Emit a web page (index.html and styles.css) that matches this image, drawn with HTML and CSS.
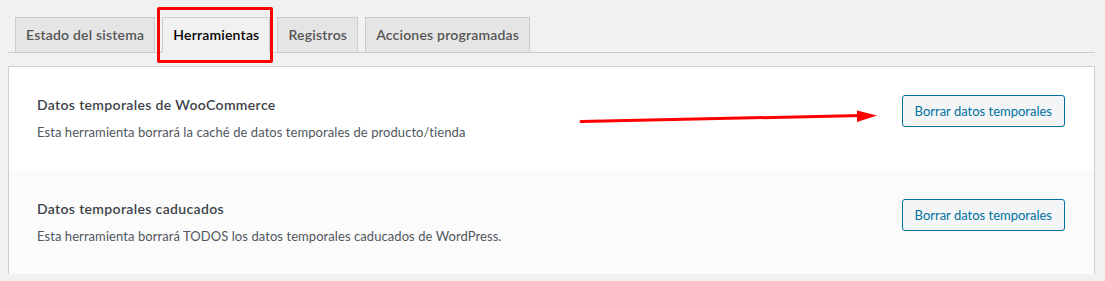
FILE: index.html
```html
<!DOCTYPE html>
<html lang="es">
<head>
<meta charset="utf-8">
<title>Estado de WooCommerce - Herramientas</title>
<link rel="stylesheet" href="styles.css">
</head>
<body>
<div class="wrap">
  <nav class="tabs">
    <a class="tab">Estado del sistema</a>
    <a class="tab tab-active">Herramientas<span class="highlight"></span></a>
    <a class="tab">Registros</a>
    <a class="tab">Acciones programadas</a>
  </nav>
  <div class="card">
    <div class="row">
      <div class="info">
        <p class="title">Datos temporales de WooCommerce</p>
        <p class="desc">Esta herramienta borrará la caché de datos temporales de producto/tienda</p>
      </div>
      <button class="btn">Borrar datos temporales</button>
    </div>
    <div class="row row-alt">
      <div class="info">
        <p class="title">Datos temporales caducados</p>
        <p class="desc">Esta herramienta borrará TODOS los datos temporales caducados de WordPress.</p>
      </div>
      <button class="btn">Borrar datos temporales</button>
    </div>
  </div>
</div>
<svg class="arrow" width="310" height="30" viewBox="575 100 310 30">
  <line x1="581" y1="121.5" x2="862" y2="115.5" stroke="#f00" stroke-width="3" stroke-linecap="round"/>
  <polygon points="857,110.5 877,115.5 857,122" fill="#f00"/>
</svg>
</body>
</html>
```
FILE: styles.css
```css
html, body {
  margin: 0;
  padding: 0;
  background: #f1f1f1;
  font-family: Lato, "Noto Sans", sans-serif;
  height: 100%;
  overflow: hidden;
}
.wrap {
  margin: 0 10px 0 8px;
}
.tabs {
  display: flex;
  gap: 7px;
  padding: 17px 0 0 7px;
  border-bottom: 1px solid #ccc;
}
.tab {
  position: relative;
  display: block;
  padding: 5px 10px;
  line-height: 24px;
  font-size: 14px;
  font-weight: 600;
  letter-spacing: 0.2px;
  color: #555;
  background: #e5e5e5;
  border: 1px solid #ccc;
  margin-bottom: -1px;
  text-decoration: none;
  white-space: nowrap;
}
.tab-active {
  background: #f1f1f1;
  color: #000;
  border-bottom-color: #f1f1f1;
}
.highlight {
  position: absolute;
  left: -6px;
  top: -11px;
  width: 110px;
  height: 50px;
  border: 3px solid #f00;
  border-radius: 2px;
}
.card {
  margin-top: 13px;
  background: #fff;
  border: 1px solid #ccd0d4;
  border-bottom: none;
}
.row {
  display: flex;
  justify-content: space-between;
  align-items: flex-start;
  padding: 28px 29px 28px 28px;
}
.row-alt {
  background: #fbfbfb;
  padding-top: 29px;
}
.info p {
  margin: 0;
}
.title {
  font-size: 14px;
  line-height: 20px;
  font-weight: 600;
  letter-spacing: 0.35px;
  color: #3c434a;
}
.desc {
  margin-top: 7px !important;
  font-size: 13px;
  line-height: 20px;
  letter-spacing: 0.07px;
  color: #50575e;
}
.btn {
  height: 32px;
  padding: 0 12px;
  font-family: inherit;
  font-size: 13px;
  line-height: 30px;
  color: #0071a1;
  background: #f3f5f6;
  border: 1px solid #0071a1;
  border-radius: 3px;
  cursor: pointer;
}
.arrow {
  position: absolute;
  left: 575px;
  top: 100px;
}
```
